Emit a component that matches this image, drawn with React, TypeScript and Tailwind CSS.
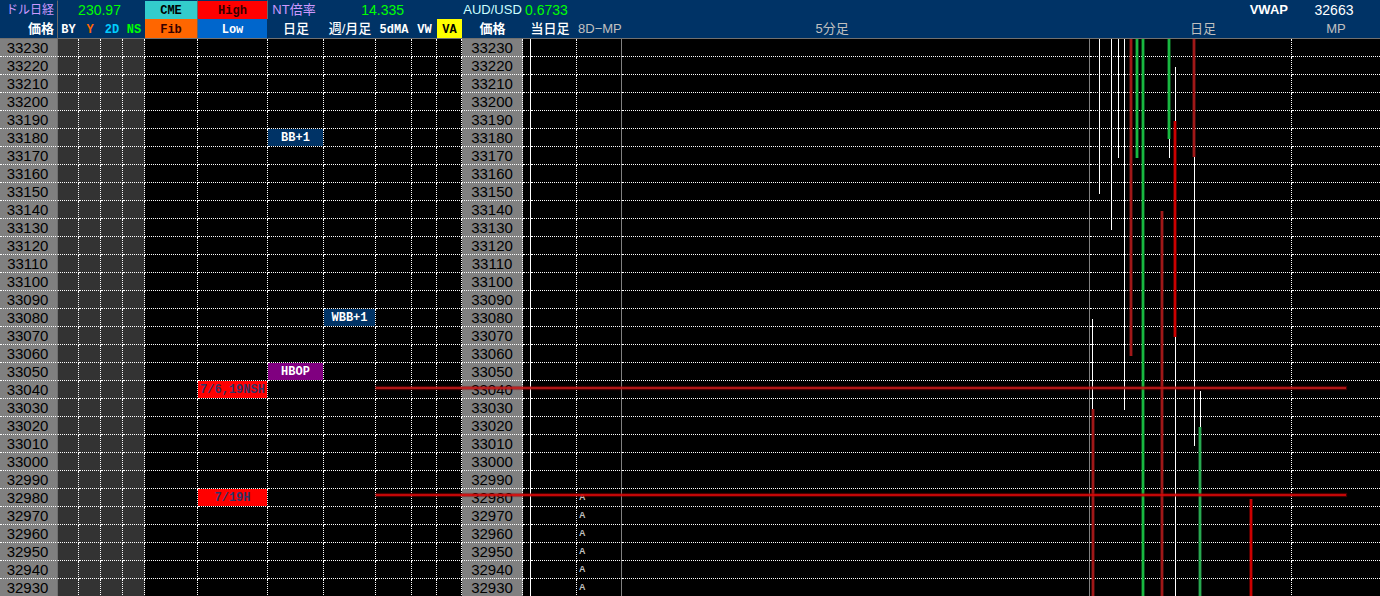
import React from "react";

const TOP_PRICE = 33230;
const STEP = 10;
const prices = Array.from({ length: 31 }, (_, i) => TOP_PRICE - i * STEP);

type Tag = { text: string; style: string };

const highLow: Record<number, Tag> = {
  33040: { text: "7/6,19NSH", style: "bg-[#ff0000] text-[#333366]" },
  32980: { text: "7/19H", style: "bg-[#ff0000] text-[#333366]" },
};
const daily: Record<number, Tag> = {
  33180: { text: "BB+1", style: "bg-[#003366] text-white" },
  33050: { text: "HBOP", style: "bg-[#800080] text-white" },
};
const weekly: Record<number, Tag> = {
  33080: { text: "WBB+1", style: "bg-[#003366] text-white" },
};

const dot = "border-b border-r border-dotted border-white";
const dark = dot + " bg-[#333333]";
const mono = "font-['Liberation_Mono',monospace] text-xs font-bold";

function TagCell({ tag }: { tag?: Tag }) {
  return (
    <td className={`${dot} ${mono} bg-clip-padding text-center whitespace-nowrap ${tag ? tag.style : ""}`}>
      {tag && <span className="block pt-px leading-4">{tag.text}</span>}
    </td>
  );
}

type Bar = { x: number; w: number; from: number; to: number; fill: string };

const WHITE = "#ffffff";
const GREEN = "#18b840";
const RED = "#a01818";
const BRIGHT = "#cc0000";
const END = 558;

const bars: Bar[] = [
  { x: 2, w: 1, from: 280, to: 370, fill: WHITE },
  { x: 9, w: 1, from: 0, to: 155, fill: WHITE },
  { x: 21, w: 1, from: 0, to: 191, fill: WHITE },
  { x: 28, w: 1, from: 0, to: 119, fill: WHITE },
  { x: 34, w: 1, from: 0, to: 371, fill: WHITE },
  { x: 79, w: 1, from: 100, to: 119, fill: WHITE },
  { x: 85, w: 1, from: 28, to: END, fill: WHITE },
  { x: 104, w: 1, from: 118, to: 407, fill: WHITE },
  { x: 110, w: 1, from: 352, to: 388, fill: WHITE },
  { x: 2, w: 2, from: 370, to: END, fill: RED },
  { x: 40, w: 2, from: 0, to: 317, fill: RED },
  { x: 46, w: 2, from: 0, to: 119, fill: GREEN },
  { x: 52, w: 2, from: 0, to: END, fill: GREEN },
  { x: 71, w: 2, from: 172, to: END, fill: RED },
  { x: 78, w: 2, from: 0, to: 100, fill: GREEN },
  { x: 84, w: 2, from: 82, to: 298, fill: BRIGHT },
  { x: 103, w: 2, from: 0, to: 118, fill: RED },
  { x: 109, w: 2, from: 388, to: END, fill: "#28a850" },
  { x: 160, w: 2, from: 460, to: END, fill: BRIGHT },
];

function DailyCandles() {
  return (
    <svg className="pointer-events-none absolute top-[39px] right-0 h-[558px] w-[290px]" viewBox="0 0 290 558" shapeRendering="crispEdges" aria-hidden="true">
      {bars.map((b, i) => (
        <g key={i}>
          {b.w > 1 && <rect x={b.x - 1} y={b.from} width={b.w + 2} height={b.to - b.from} fill={b.fill} opacity="0.4" />}
          <rect x={b.x} y={b.from} width={b.w} height={b.to - b.from} fill={b.fill} />
        </g>
      ))}
    </svg>
  );
}

function Board() {
  return (
    <table className="w-full table-fixed border-separate border-spacing-0">
      <colgroup>
        <col className="w-[58px]" />
        <col className="w-[21px]" />
        <col className="w-[22px]" />
        <col className="w-[22px]" />
        <col className="w-[22px]" />
        <col className="w-[53px]" />
        <col className="w-[70px]" />
        <col className="w-[56px]" />
        <col className="w-[52px]" />
        <col className="w-[36px]" />
        <col className="w-[25px]" />
        <col className="w-[25px]" />
        <col className="w-[61px]" />
        <col className="w-[8px]" />
        <col className="w-[46px]" />
        <col className="w-[45px]" />
        <col />
        <col className="w-[202px]" />
        <col className="w-[88px]" />
      </colgroup>
      <thead className="bg-[#003366] text-[13px] whitespace-nowrap text-white [&_th]:p-0 [&_th]:font-normal">
        <tr className="h-[19px] [&>th]:border-t [&>th]:border-t-[#003366] [&>th]:leading-[18px]">
          <th className="border-r border-r-[#666666] text-right text-xs"><span className="pr-[3px] text-[#cc99ff]">ドル日経</span></th>
          <th colSpan={4} className="text-sm text-[#00ff00]"><span className="pr-1">230.97</span></th>
          <th className="border-r border-r-[#666666] bg-[#33cccc]"><span className={`${mono} text-black`}>CME</span></th>
          <th className="border-r border-r-[#666666] bg-[#ff0000]"><span className={`${mono} text-[#330000]`}>High</span></th>
          <th className="text-[#cc99ff]"><span className="pr-1">NT倍率</span></th>
          <th colSpan={2} className="text-right text-sm text-[#00ff00]"><span className="pr-2">14.335</span></th>
          <th colSpan={2} />
          <th className="text-[#ccffff]">AUD/USD</th>
          <th colSpan={3} className="text-left text-sm text-[#00ff00]"><span className="pl-0.5">0.6733</span></th>
          <th />
          <th className="text-right"><span className="pr-1 font-bold">VWAP</span></th>
          <th className="text-sm"><span className="pr-1">32663</span></th>
        </tr>
        <tr className="h-[20px] [&>th]:border-b [&>th]:border-b-[#707070] [&>th]:leading-[19px]">
          <th className="border-r border-r-[#666666] text-right"><span className="pr-[3px] font-bold">価格</span></th>
          <th><span className={mono}>BY</span></th>
          <th><span className={`${mono} text-[#ff6600]`}>Y</span></th>
          <th><span className={`${mono} text-[#00ccff]`}>2D</span></th>
          <th><span className={`${mono} text-[#00ff00]`}>NS</span></th>
          <th className="border-r border-r-[#666666] bg-[#ff6600]"><span className={`${mono} text-[#330000]`}>Fib</span></th>
          <th className="border-r border-r-[#003366] bg-[#0066cc]"><span className={mono}>Low</span></th>
          <th><span className="font-medium">日足</span></th>
          <th><span className="font-medium">週/月足</span></th>
          <th><span className={mono}>5dMA</span></th>
          <th><span className={mono}>VW</span></th>
          <th className="bg-[#ffff00]"><span className={`${mono} text-black`}>VA</span></th>
          <th><span className="font-bold">価格</span></th>
          <th colSpan={2}><span className="font-medium">当日足</span></th>
          <th className="text-left text-[#c0c0c0]"><span className="pl-px">8D−MP</span></th>
          <th className="text-[#c0c0c0]"><span className="pr-12">5分足</span></th>
          <th className="text-[#c0c0c0]"><span className="pl-6">日足</span></th>
          <th className="text-[#c0c0c0]">MP</th>
        </tr>
      </thead>
      <tbody className="[&_td]:p-0">
        {prices.map((p) => (
          <tr key={p} className="h-[18px]">
            <td className="border-r border-b border-r-[#707070] border-b-white bg-[#808080] text-center text-[15px] leading-[17px] text-black [border-bottom-style:dotted]"><span className="pr-0.5">{p}</span></td>
            <td className={dark} />
            <td className={dark} />
            <td className={dark} />
            <td className={dark} />
            <td className={dot} />
            <TagCell tag={highLow[p]} />
            <TagCell tag={daily[p]} />
            <TagCell tag={weekly[p]} />
            <td className={dot} />
            <td className={dot} />
            <td className={dot} />
            <td className={`${dot} bg-[#808080] text-center text-[15px] leading-[17px] text-black`}>{p}</td>
            <td className="border-r border-b border-white [border-bottom-style:dotted]" />
            <td className={dot} />
            <td className="border-r border-b border-r-[#808080] border-b-white text-left text-[9px] font-bold text-[#c0c0c0] [border-bottom-style:dotted]">
              {p <= 32980 && <span className="block pl-0.5 leading-[17px]">A</span>}
            </td>
            <td className="border-r border-b border-r-[#808080] border-b-white [border-bottom-style:dotted]" />
            <td className={dot} />
            <td className="border-b border-dotted border-white" />
          </tr>
        ))}
      </tbody>
    </table>
  );
}

export default function App() {
  return (
    <main className="h-screen overflow-auto bg-black font-['Liberation_Sans','Noto_Sans_CJK_JP',sans-serif] [scrollbar-width:none]">
      <div className="relative min-w-[1000px]">
        <Board />
        <DailyCandles />
        <div className="pointer-events-none absolute top-[387px] right-[34px] left-[376px] h-0.5 bg-[#c01818]/90 shadow-[0_0_1px_1px_#a0000080]" />
        <div className="pointer-events-none absolute top-[494px] right-[34px] left-[376px] h-0.5 bg-[#d80808]/90 shadow-[0_0_1px_1px_#a0000080]" />
      </div>
    </main>
  );
}
